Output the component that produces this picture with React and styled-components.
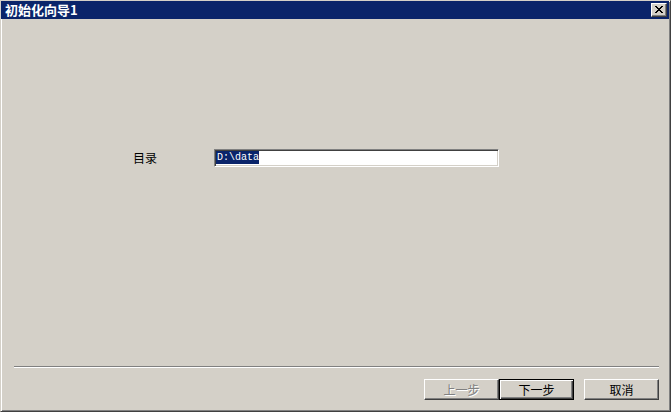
import React from "react";
import styled, { createGlobalStyle } from "styled-components";

const Global = createGlobalStyle`
  html, body { margin: 0; padding: 0; background: #d4d0c8; }
  body { font-family: "Noto Sans CJK SC", "Liberation Sans", sans-serif; }
  * { box-sizing: border-box; }
`;

const Frame = styled.div`
  width: 671px;
  height: 412px;
  display: flex;
  flex-direction: column;
  background: #d4d0c8;
  border-style: solid;
  border-width: 1px;
  border-color: #d4d0c8 #404040 #404040 #d4d0c8;
  box-shadow: inset 1px 1px #ffffff, inset -1px -1px #808080;
`;

const TitleBar = styled.div`
  height: 18px;
  flex: none;
  display: flex;
  align-items: center;
  justify-content: space-between;
  padding: 0 2px 0 4px;
  margin-right: 1px;
  background: #0a246a;
`;

const Title = styled.span`
  color: #ffffff;
  font-weight: bold;
  font-size: 13px;
  line-height: 18px;
`;

const CloseButton = styled.div`
  width: 16px;
  height: 14px;
  display: flex;
  align-items: center;
  justify-content: center;
  background: #d4d0c8;
  border-style: solid;
  border-width: 1px;
  border-color: #ffffff #404040 #404040 #ffffff;
  box-shadow: inset -1px -1px #808080;
  padding: 0 1px 1px 0;
`;

const Body = styled.div`
  flex: 1;
  padding: 130px 0 0 132px;
`;

const FieldRow = styled.div`
  display: flex;
  align-items: center;
  height: 18px;
`;

const Label = styled.span`
  width: 81px;
  font-size: 12px;
  color: #000;
  line-height: 18px;
`;

const TextBox = styled.div`
  width: 285px;
  height: 18px;
  background: #ffffff;
  border-style: solid;
  border-width: 1px;
  border-color: #808080 #ffffff #ffffff #808080;
  box-shadow: inset 1px 1px #404040, inset -1px -1px #d4d0c8;
  padding: 1px 0 0 1px;
  display: flex;
  align-items: flex-start;
`;

const Selected = styled.span`
  display: inline-block;
  height: 13px;
  line-height: 13px;
  padding: 0 0 0 1px;
  background: #0a246a;
  color: #ffffff;
  font-family: "Liberation Mono", "DejaVu Sans Mono", monospace;
  font-size: 10px;
`;

const Footer = styled.div`
  flex: none;
  display: flex;
  flex-direction: column;
  padding-bottom: 11px;
`;

const Separator = styled.div`
  height: 2px;
  margin: 0 11px 0 13px;
  border-top: 1px solid #808080;
  border-bottom: 1px solid #ffffff;
`;

const ButtonRow = styled.div`
  display: flex;
  justify-content: flex-end;
  margin: 11px 11px 0 0;
`;

const Button = styled.div`
  width: 75px;
  height: 21px;
  margin-left: ${(p) => p.$gap || 0}px;
  display: flex;
  align-items: center;
  justify-content: center;
  font-size: 12px;
  background: #d4d0c8;
  color: ${(p) => (p.$disabled ? "#808080" : "#000000")};
  text-shadow: ${(p) => (p.$disabled ? "1px 1px #ffffff" : "none")};
  border: 1px solid;
  border-color: ${(p) =>
    p.$default ? "#000000" : "#ffffff #404040 #404040 #ffffff"};
  box-shadow: ${(p) =>
    p.$default
      ? "inset 1px 1px #ffffff, inset -1px -1px #404040, inset -2px -2px #808080"
      : "inset -1px -1px #808080"};
  padding-bottom: 1px;
`;

export default function App() {
  return (
    <>
      <Global />
      <Frame>
        <TitleBar>
          <Title>初始化向导1</Title>
          <CloseButton>
            <svg width="8" height="7" viewBox="0 0 8 7" shapeRendering="crispEdges">
              <path
                d="M0 0h2v1h-2zM6 0h2v1h-2zM1 1h2v1h-2zM5 1h2v1h-2zM2 2h4v1h-4zM3 3h2v1h-2zM2 4h4v1h-4zM1 5h2v1h-2zM5 5h2v1h-2zM0 6h2v1h-2zM6 6h2v1h-2z"
                fill="#000"
              />
            </svg>
          </CloseButton>
        </TitleBar>
        <Body>
          <FieldRow>
            <Label>目录</Label>
            <TextBox>
              <Selected>D:\data</Selected>
            </TextBox>
          </FieldRow>
        </Body>
        <Footer>
          <Separator />
          <ButtonRow>
            <Button $disabled>上一步</Button>
            <Button $default>下一步</Button>
            <Button $gap={10}>取消</Button>
          </ButtonRow>
        </Footer>
      </Frame>
    </>
  );
}
